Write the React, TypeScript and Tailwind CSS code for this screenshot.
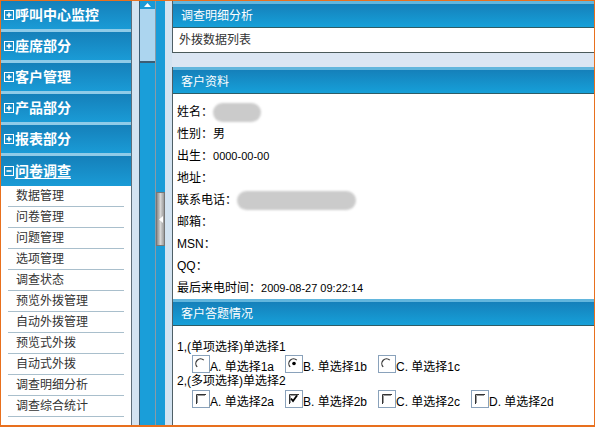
import React from "react";

const font = { fontFamily: '"Liberation Sans", "Noto Sans CJK SC", sans-serif' };

const menus = ["呼叫中心监控", "座席部分", "客户管理", "产品部分", "报表部分"];
const subItems = [
	"数据管理",
	"问卷管理",
	"问题管理",
	"选项管理",
	"调查状态",
	"预览外拨管理",
	"自动外拨管理",
	"预览式外拨",
	"自动式外拨",
	"调查明细分析",
	"调查综合统计",
];

/** Small boxed plus / minus icon in front of the menu titles */
const BoxIcon = ({ open }: { open?: boolean }) => (
	<svg width="10" height="10" viewBox="0 0 10 10" className="mr-[1px] shrink-0">
		<rect x="0.5" y="0.5" width="9" height="9" fill="none" stroke="#fff" />
		<path d="M2.5 5h5" stroke="#fff" strokeWidth="1.6" />
		{!open && <path d="M5 2.5v5" stroke="#fff" strokeWidth="1.6" />}
	</svg>
);

const MenuHeader = ({ label, open }: { label: string; open?: boolean }) => (
	<div
		className={`flex items-center bg-gradient-to-b from-[#1580ba] to-[#1a9bd6] pl-[3px] text-[14px] font-bold text-white ${open ? "h-[30px]" : "h-[31px] border-b-[3px] border-[#8fcbe8]"}`}
	>
		<BoxIcon open={open} />
		<span className={open ? "underline underline-offset-2" : ""}>{label}</span>
	</div>
);

const PanelHeader = ({ label }: { label: string }) => (
	<div className="flex h-[27px] items-center border-t-[3px] border-b border-t-[#62b6dd] border-b-[#2e5c66] bg-gradient-to-b from-[#1580ba] to-[#16a0d9] pl-[8px] text-[12px] text-white">
		{label}
	</div>
);

/** Classic sunken check / radio control inside a light frame */
const Control = ({ kind, checked }: { kind: "radio" | "check"; checked?: boolean }) => (
	<svg width="18" height="18" viewBox="0 0 18 18" className="shrink-0">
		<rect x="0.5" y="0.5" width="17" height="17" fill="#fff" stroke="#8aa2bb" />
		{kind === "check" ? (
			<>
				<path d="M4.5 14V4.5H14" fill="none" stroke="#333" />
				<path d="M5.5 13V5.5H13" fill="none" stroke="#999" />
				{checked && <path d="M6 8.5l2 2.5 4-5.5" fill="none" stroke="#000" strokeWidth="1.8" />}
			</>
		) : (
			<>
				<path d="M5.2 11.8A4.5 4.5 0 0 1 11.8 5.2" fill="none" stroke="#333" strokeWidth="1.2" />
				{checked && <circle cx="9" cy="8.5" r="1.8" fill="#000" />}
			</>
		)}
	</svg>
);

const Blur = ({ w }: { w: number }) => (
	<span className="inline-block h-[19px] rounded-full bg-[#cbcbcb] blur-[1px]" style={{ width: w }} />
);

const App = () => {
	const rows: [string, React.ReactNode][] = [
		["姓名：", <Blur w={48} />],
		["性别：", "男"],
		["出生：", <span className="text-[11px]">0000-00-00</span>],
		["地址：", null],
		["联系电话：", <Blur w={119} />],
		["邮箱：", null],
		["MSN：", null],
		["QQ：", null],
		["最后来电时间：", <span className="text-[11px]">2009-08-27 09:22:14</span>],
	];

	return (
		<div
			style={font}
			className="flex h-[427px] w-[595px] overflow-hidden border-x border-t border-b-2 border-[#e8701e] bg-[#dbe6f3]"
		>
			{/* Left menu */}
			<aside className="flex w-[131px] shrink-0 flex-col border-r border-[#5e6e7a] bg-white">
				{menus.map((m) => (
					<MenuHeader key={m} label={m} />
				))}
				<MenuHeader label="问卷调查" open />
				<div className="flex flex-col">
					{subItems.map((s) => (
						<div
							key={s}
							className="mx-[7px] flex h-[21px] items-center border-b border-[#a9bfcc] pl-[8px] text-[12px] text-[#333]"
						>
							{s}
						</div>
					))}
				</div>
			</aside>

			{/* Scrollbar and splitter strip */}
			<div className="flex w-[40px] shrink-0">
				<div className="w-[7px] bg-[#d3e3f1]" />
				<div className="flex w-[16px] flex-col border-l border-[#3b5d74]">
					<div className="flex h-[8px] items-center justify-center bg-[#1a9ad6]">
						<svg width="7" height="4" viewBox="0 0 7 4">
							<path d="M0 4L3.5 0 7 4z" fill="#fff" />
						</svg>
					</div>
					<div className="h-[52px] bg-[#acd5ef]" />
					<div className="flex-1 border-t-2 border-[#3b5d74] bg-[#1a9ed9]" />
				</div>
				<div className="flex w-[10px] flex-col border-l border-[#8a9aa6] bg-[#1a9cd8]">
					<div className="h-[191px]" />
					<div className="flex h-[54px] items-center justify-center border border-[#777] bg-gradient-to-r from-[#8c8c8c] via-[#d6d6d6] to-[#9a9a9a]">
						<svg width="4" height="7" viewBox="0 0 4 7">
							<path d="M4 0L0 3.5 4 7z" fill="#fff" />
						</svg>
					</div>
				</div>
				<div className="w-[7px] bg-[#d3e3f1]" />
			</div>

			{/* Content */}
			<main className="flex flex-1 flex-col">
				<section className="border-l border-[#4f5f66]">
					<PanelHeader label="调查明细分析" />
					<div className="flex h-[25px] items-center border-b border-[#4a5a5a] bg-white pl-[6px] text-[12px] text-[#333]">
						外拨数据列表
					</div>
				</section>

				<section className="mt-[14px] flex flex-1 flex-col border-l border-[#4f5f66] bg-white">
					<PanelHeader label="客户资料" />
					<div className="flex flex-col pl-[4px] pt-[7px] text-[12px] text-black">
						{rows.map(([k, v]) => (
							<div key={k} className="flex h-[22px] items-center">
								<span>{k}</span>
								{v}
							</div>
						))}
					</div>
					<PanelHeader label="客户答题情况" />
					<div className="flex flex-col pl-[4px] pt-[14px] text-[12px] text-black">
						<div className="leading-[14px]">1,(单项选择)单选择1</div>
						<div className="flex h-[19px] items-end pl-[15px]">
							{[
								["A. 单选择1a", false],
								["B. 单选择1b", true],
								["C. 单选择1c", false],
							].map(([l, c]) => (
								<div key={l as string} className="flex w-[93px] items-end">
									<Control kind="radio" checked={c as boolean} />
									<span className="leading-[12px]">{l}</span>
								</div>
							))}
						</div>
						<div className="mt-[1px] leading-[14px]">2,(多项选择)单选择2</div>
						<div className="mt-[1px] flex h-[19px] items-end pl-[15px]">
							{[
								["A. 单选择2a", false],
								["B. 单选择2b", true],
								["C. 单选择2c", false],
								["D. 单选择2d", false],
							].map(([l, c]) => (
								<div key={l as string} className="flex w-[93px] items-end">
									<Control kind="check" checked={c as boolean} />
									<span className="leading-[12px]">{l}</span>
								</div>
							))}
						</div>
					</div>
				</section>
			</main>
		</div>
	);
};

export default App;
